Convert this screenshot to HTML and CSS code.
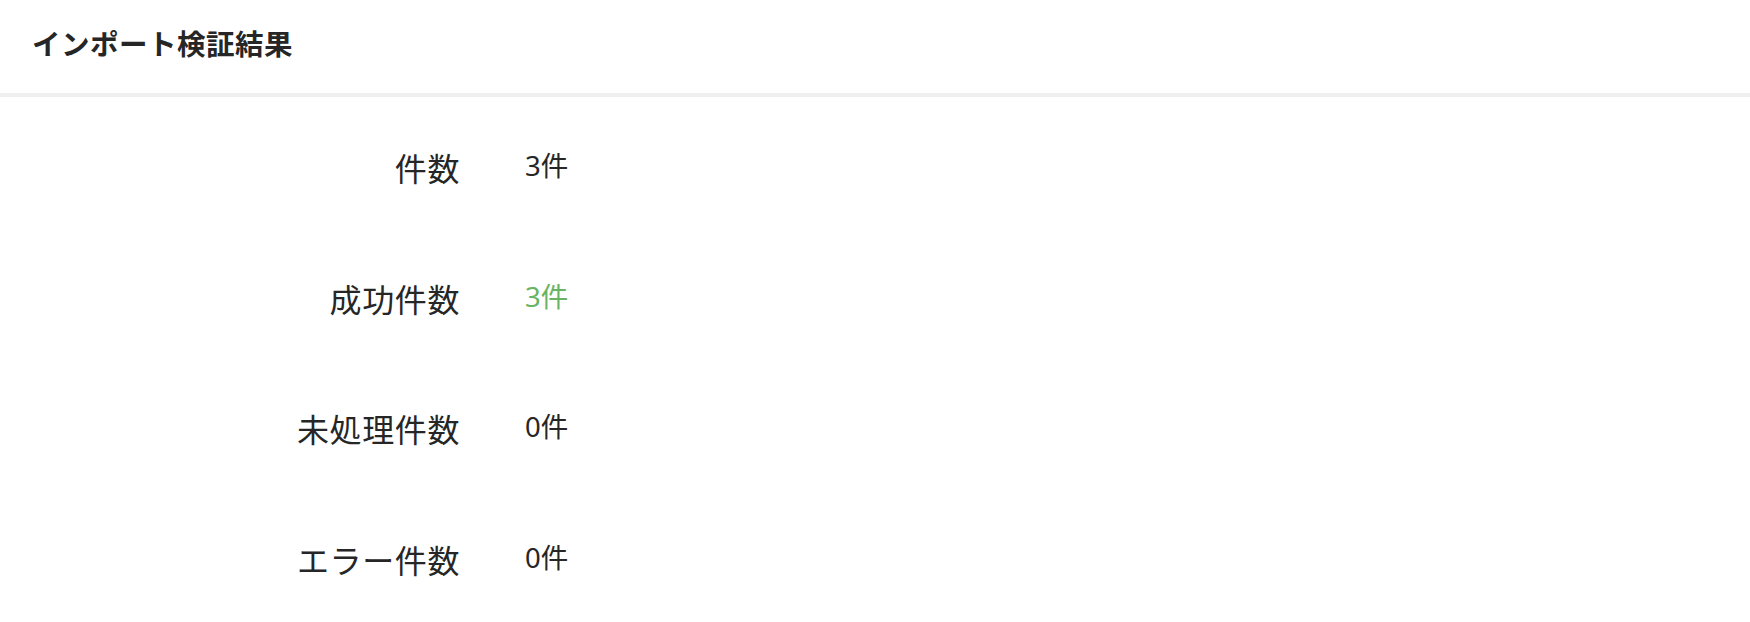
FILE: index.html
```html
<!DOCTYPE html>
<html lang="ja">
<head>
<meta charset="utf-8">
<link rel="stylesheet" href="styles.css">
</head>
<body>
<div class="panel">
  <header class="panel-header">
    <h1 class="panel-title">インポート検証結果</h1>
  </header>
  <dl class="result-list">
    <div class="result-row">
      <dt class="result-label">件数</dt>
      <dd class="result-value">3件</dd>
    </div>
    <div class="result-row">
      <dt class="result-label">成功件数</dt>
      <dd class="result-value success">3件</dd>
    </div>
    <div class="result-row">
      <dt class="result-label">未処理件数</dt>
      <dd class="result-value">0件</dd>
    </div>
    <div class="result-row">
      <dt class="result-label">エラー件数</dt>
      <dd class="result-value">0件</dd>
    </div>
  </dl>
</div>
</body>
</html>
```

FILE: styles.css
```css
html, body {
  margin: 0;
  padding: 0;
  background: #ffffff;
}
body {
  font-family: "Noto Sans CJK JP", "Noto Sans", sans-serif;
  color: #262626;
}
.panel {
  width: 1750px;
}
.panel-header {
  display: flex;
  align-items: center;
  padding: 0 0 6px 32px;
  box-sizing: border-box;
  height: 97px;
  border-bottom: 4px solid #efefef;
}
.panel-title {
  margin: 0;
  font-size: 28.5px;
  font-weight: 700;
  letter-spacing: 0.5px;
  color: #262626;
  line-height: 1;
}
.result-list {
  margin: 0;
  padding: 0;
  display: flex;
  flex-direction: column;
  padding-top: 5px;
}
.result-row {
  display: grid;
  grid-template-columns: 460px auto;
  column-gap: 65px;
  align-items: center;
  height: 130.5px;
}
.result-label {
  margin: 0;
  text-align: right;
  font-size: 32px;
  line-height: 40px;
  font-weight: 400;
  letter-spacing: 0.6px;
}
.result-value {
  margin: 0;
  font-family: "Noto Sans", "Noto Sans CJK JP", sans-serif;
  font-size: 27.5px;
  line-height: 40px;
  position: relative;
  top: -1px;
}
.result-value.success {
  color: #68b462;
}
```
